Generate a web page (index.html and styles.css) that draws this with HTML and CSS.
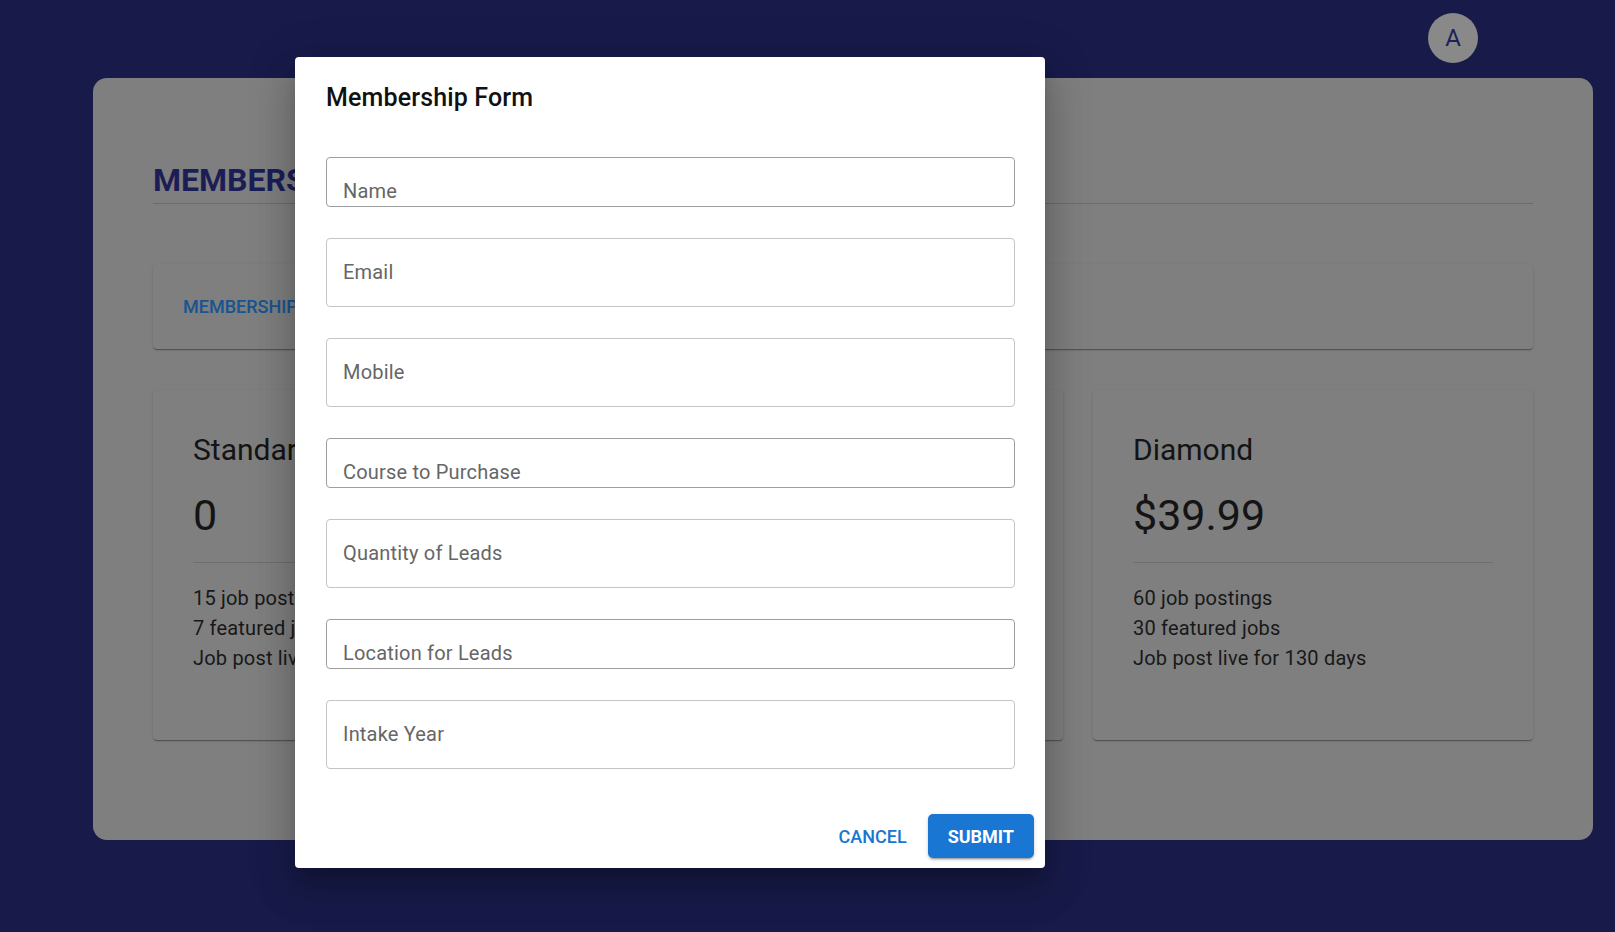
FILE: index.html
```html
<!DOCTYPE html>
<html lang="en">
<head>
<meta charset="utf-8">
<title>Membership</title>
<link rel="stylesheet" href="styles.css">
</head>
<body>
<div class="page">
  <header class="topbar">
    <div class="avatar">A</div>
  </header>
  <main class="panel">
    <h1 class="panel-title">MEMBERSHIP</h1>
    <div class="tab-card">
      <span class="tab-label">MEMBERSHIP</span>
    </div>
    <div class="plans">
      <section class="plan">
        <h2 class="plan-name">Standard</h2>
        <div class="plan-price">0</div>
        <hr class="plan-divider">
        <ul class="plan-features">
          <li>15 job postings</li>
          <li>7 featured jobs</li>
          <li>Job post live</li>
        </ul>
      </section>
      <section class="plan">
        <h2 class="plan-name">Premium</h2>
        <div class="plan-price">$19.99</div>
        <hr class="plan-divider">
        <ul class="plan-features">
          <li>30 job postings</li>
          <li>15 featured jobs</li>
          <li>Job post live for 60 days</li>
        </ul>
      </section>
      <section class="plan">
        <h2 class="plan-name">Diamond</h2>
        <div class="plan-price">$39.99</div>
        <hr class="plan-divider">
        <ul class="plan-features">
          <li>60 job postings</li>
          <li>30 featured jobs</li>
          <li>Job post live for 130 days</li>
        </ul>
      </section>
    </div>
  </main>

  <div class="dialog" role="dialog" aria-labelledby="dlg-title">
    <h2 class="dialog-title" id="dlg-title">Membership Form</h2>
    <div class="dialog-content">
      <div class="field field-short"><span class="field-label">Name</span></div>
      <div class="field field-tall"><span class="field-label">Email</span></div>
      <div class="field field-tall"><span class="field-label">Mobile</span></div>
      <div class="field field-short"><span class="field-label">Course to Purchase</span></div>
      <div class="field field-tall"><span class="field-label">Quantity of Leads</span></div>
      <div class="field field-short"><span class="field-label">Location for Leads</span></div>
      <div class="field field-tall"><span class="field-label">Intake Year</span></div>
    </div>
    <div class="dialog-actions">
      <button class="btn btn-text" type="button">CANCEL</button>
      <button class="btn btn-contained" type="button">SUBMIT</button>
    </div>
  </div>
</div>
</body>
</html>
```

FILE: styles.css
```css
* {
  box-sizing: border-box;
}

html, body {
  margin: 0;
  padding: 0;
}

body {
  background: #181b4a;
  font-family: Roboto, "Liberation Sans", Arial, sans-serif;
  color: #141414;
  overflow: hidden;
}

.page {
  position: relative;
  width: 1615px;
  height: 932px;
}

/* top bar */
.topbar {
  height: 78px;
  display: flex;
  justify-content: flex-end;
  align-items: flex-start;
  padding: 13px 137px 0 0;
}

.avatar {
  width: 50px;
  height: 50px;
  border-radius: 50%;
  background: #898989;
  color: #1d2156;
  font-size: 24px;
  display: flex;
  align-items: center;
  justify-content: center;
  line-height: 1;
}

/* main panel */
.panel {
  margin: 0 22px 0 93px;
  height: 762px;
  background: #7f7f7f;
  border-radius: 14px;
  padding: 83px 60px 0;
}

.panel-title {
  margin: 0;
  font-size: 32px;
  font-weight: 700;
  line-height: 38.4px;
  color: #1b1e56;
  padding-bottom: 4px;
  border-bottom: 1px solid #6c6c6c;
}

.tab-card {
  margin-top: 60px;
  height: 85px;
  background: #7f7f7f;
  border-radius: 4px;
  box-shadow: 0 2px 1px -1px rgba(0,0,0,0.2), 0 1px 1px 0 rgba(0,0,0,0.14), 0 1px 3px 0 rgba(0,0,0,0.12);
  display: flex;
  align-items: center;
  padding-left: 30px;
}

.tab-label {
  font-size: 18px;
  font-weight: 500;
  color: #175490;
}

.plans {
  margin-top: 41px;
  display: grid;
  grid-template-columns: repeat(3, 1fr);
  gap: 30px;
}

.plan {
  height: 350px;
  background: #7f7f7f;
  border-radius: 4px;
  box-shadow: 0 2px 1px -1px rgba(0,0,0,0.2), 0 1px 1px 0 rgba(0,0,0,0.14), 0 1px 3px 0 rgba(0,0,0,0.12);
  padding: 42px 40px 0;
}

.plan-name {
  margin: 0;
  font-size: 30px;
  font-weight: 400;
  line-height: 36px;
  color: #141414;
}

.plan-price {
  margin-top: 22px;
  font-size: 43px;
  line-height: 51px;
  color: #141414;
}

.plan-divider {
  margin: 21px 0 20px;
  border: 0;
  height: 1px;
  background: #6e6e6e;
}

.plan-features {
  list-style: none;
  margin: 0;
  padding: 0;
  font-size: 20px;
  line-height: 30px;
  letter-spacing: 0.19px;
  color: #181818;
}

/* dialog */
.dialog {
  position: absolute;
  left: 295px;
  top: 57px;
  width: 750px;
  background: #ffffff;
  border-radius: 4px;
  box-shadow: 0 11px 15px -7px rgba(0,0,0,0.2), 0 24px 38px 3px rgba(0,0,0,0.14), 0 9px 46px 8px rgba(0,0,0,0.12);
}

.dialog-title {
  margin: 0;
  padding: 22px 30px 0 31px;
  font-size: 25px;
  font-weight: 500;
  line-height: 38.4px;
  letter-spacing: 0.15px;
  color: #111111;
}

.dialog-content {
  padding: 39.6px 30px 0 31px;
  display: flex;
  flex-direction: column;
  gap: 31px;
}

.field {
  border: 1px solid #c4c4c4;
  border-radius: 4px;
  display: flex;
  padding: 0 16px;
}

.field-tall {
  height: 69px;
  align-items: center;
  padding-bottom: 1px;
}

.field-short {
  height: 50px;
  align-items: flex-end;
  padding-bottom: 3px;
  border-color: #9e9e9e;
}

.field-label {
  font-size: 20px;
  line-height: 24px;
  letter-spacing: 0.19px;
  color: #666666;
}

.dialog-actions {
  padding: 45px 11px 10px;
  display: flex;
  justify-content: flex-end;
  align-items: center;
  gap: 13px;
}

.btn {
  font-family: Roboto, "Liberation Sans", Arial, sans-serif;
  font-size: 18px;
  border: 0;
  border-radius: 5px;
  height: 44px;
  cursor: pointer;
}

.btn-text {
  background: transparent;
  color: #1976d2;
  font-weight: 500;
  padding: 0 8px;
}

.btn-contained {
  background: #1976d2;
  color: #ffffff;
  font-weight: 700;
  padding: 0 20px;
  box-shadow: 0 3px 1px -2px rgba(0,0,0,0.2), 0 2px 2px 0 rgba(0,0,0,0.14), 0 1px 5px 0 rgba(0,0,0,0.12);
}
```
